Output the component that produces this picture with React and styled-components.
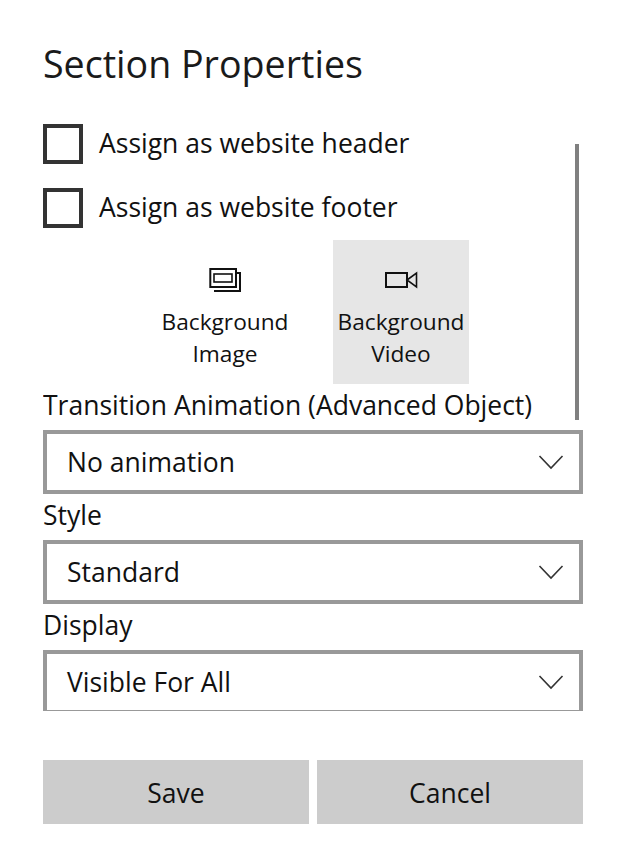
import React from 'react';
import styled, { createGlobalStyle } from 'styled-components';

const GlobalStyle = createGlobalStyle`
  html, body {
    margin: 0;
    padding: 0;
    background: #ffffff;
  }
`;

const Panel = styled.div`
  width: 629px;
  height: 864px;
  box-sizing: border-box;
  padding: 36px 46px 0 43px;
  font-family: "Open Sans", "Noto Sans", sans-serif;
  color: #111111;
  overflow: hidden;
`;

const Title = styled.h1`
  margin: 0 0 28px;
  height: 60px;
  line-height: 56px;
  font-size: 37.6px;
  font-weight: 400;
  color: #1a1a1a;
`;

const ScrollArea = styled.div`
  position: relative;
  height: 587px;
  overflow: hidden;
`;

const Scrollbar = styled.div`
  position: absolute;
  top: 20px;
  right: 4px;
  width: 4px;
  height: 276px;
  background: #808080;
`;

const CheckRow = styled.label`
  display: flex;
  align-items: center;
  gap: 16px;
  height: 40px;
  margin-bottom: 24px;
  font-size: 26.5px;
`;

const CheckBox = styled.span`
  box-sizing: border-box;
  width: 40px;
  height: 40px;
  border: 4px solid #333333;
`;

const CheckText = styled.span`
  margin-top: -2px;
`;

const Tiles = styled.div`
  display: flex;
  justify-content: center;
  gap: 40px;
  margin-top: -12px;
`;

const Tile = styled.div`
  box-sizing: border-box;
  width: 136px;
  height: 144px;
  padding-top: 26px;
  display: flex;
  flex-direction: column;
  align-items: center;
  background: ${p => (p.$active ? '#e6e6e6' : 'transparent')};
  font-size: 22.7px;
  line-height: 32px;
  text-align: center;
`;

const TileIcon = styled.svg`
  display: block;
  width: 34px;
  height: 28px;
  margin-bottom: 12px;
  fill: none;
  stroke: #111111;
  stroke-width: 2;
`;

const FieldLabel = styled.div`
  height: 46px;
  line-height: 42px;
  font-size: 26.5px;
`;

const Select = styled.div`
  box-sizing: border-box;
  height: 64px;
  border: 4px solid #999999;
  display: flex;
  align-items: center;
  justify-content: space-between;
  padding: 0 15px 0 20px;
  font-size: 26.5px;
`;

const Chevron = styled.svg`
  width: 26px;
  height: 16px;
  fill: none;
  stroke: #333333;
  stroke-width: 1.6;
`;

const ButtonRow = styled.div`
  display: flex;
  gap: 8px;
  margin-top: 49px;
`;

const ActionButton = styled.button`
  flex: 1;
  height: 64px;
  border: none;
  padding: 2px 0 0;
  background: #cccccc;
  color: #111111;
  font-family: inherit;
  font-size: 26.5px;
`;

const Dropdown = ({ value }) => (
  <Select>
    <span>{value}</span>
    <Chevron viewBox="0 0 26 16">
      <path d="M1.5 2 L13 14 L24.5 2" />
    </Chevron>
  </Select>
);

export default function App() {
  return (
    <Panel>
      <GlobalStyle />
      <Title>Section Properties</Title>
      <ScrollArea>
        <Scrollbar />
        <CheckRow>
          <CheckBox />
          <CheckText>Assign as website header</CheckText>
        </CheckRow>
        <CheckRow>
          <CheckBox />
          <CheckText>Assign as website footer</CheckText>
        </CheckRow>
        <Tiles>
          <Tile>
            <TileIcon viewBox="0 0 34 28">
              <rect x="2.3" y="3" width="25.7" height="18" />
              <rect x="6" y="8" width="18" height="8" strokeWidth="1.6" />
              <path d="M6 25 H32 V7 H28" />
            </TileIcon>
            Background<br />Image
          </Tile>
          <Tile $active>
            <TileIcon viewBox="0 0 34 28">
              <rect x="2" y="7" width="21" height="14" />
              <path d="M23 14 L32.5 7 V21 Z" strokeWidth="1.6" />
            </TileIcon>
            Background<br />Video
          </Tile>
        </Tiles>
        <FieldLabel>Transition Animation (Advanced Object)</FieldLabel>
        <Dropdown value="No animation" />
        <FieldLabel>Style</FieldLabel>
        <Dropdown value="Standard" />
        <FieldLabel>Display</FieldLabel>
        <Dropdown value="Visible For All" />
      </ScrollArea>
      <ButtonRow>
        <ActionButton>Save</ActionButton>
        <ActionButton>Cancel</ActionButton>
      </ButtonRow>
    </Panel>
  );
}
